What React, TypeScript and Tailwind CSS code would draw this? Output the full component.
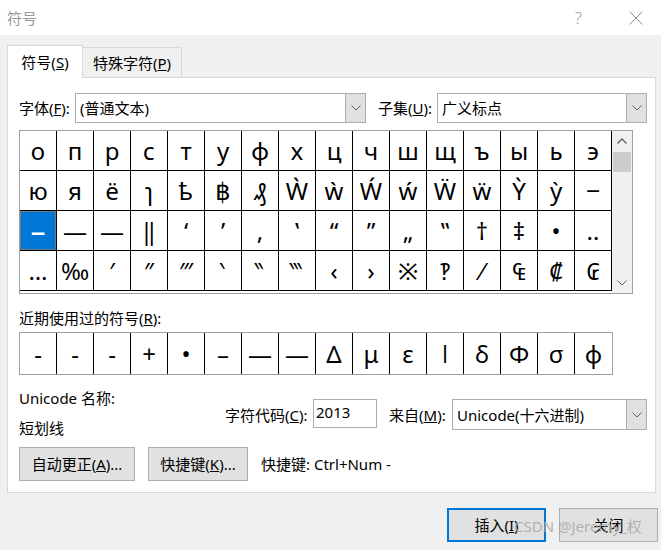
import React from 'react';

const rows: string[][] = [
  ['о', 'п', 'р', 'с', 'т', 'у', 'ф', 'х', 'ц', 'ч', 'ш', 'щ', 'ъ', 'ы', 'ь', 'э'],
  ['ю', 'я', 'ё', 'ɿ', 'ҍ', '฿', '₰', 'Ẁ', 'ẁ', 'Ẃ', 'ẃ', 'Ẅ', 'ẅ', 'Ỳ', 'ỳ', '‒'],
  ['–', '—', '―', '‖', '‘', '’', '‚', '‛', '“', '”', '„', '‟', '†', '‡', '•', '‥'],
  ['…', '‰', '′', '″', '‴', '‵', '‶', '‷', '‹', '›', '※', '‽', '⁄', '₠', '₡', '₢'],
];

const recent = ['-', '-', '-', '+', '•', '–', '—', '―', 'Δ', 'μ', 'ε', 'ǀ', 'δ', 'Φ', 'σ', 'φ'];

function ChevronDown() {
  return (
    <svg width="10" height="6" viewBox="0 0 10 6" fill="none">
      <polyline points="0.5,0.5 5,5 9.5,0.5" stroke="#606060" strokeWidth="1" />
    </svg>
  );
}

function ChevronUp() {
  return (
    <svg width="10" height="6" viewBox="0 0 10 6" fill="none">
      <polyline points="0.5,5.5 5,1 9.5,5.5" stroke="#606060" strokeWidth="1.3" />
    </svg>
  );
}

function Combo({ className, text }: { className: string; text: string }) {
  return (
    <div className={`flex border border-[#adadad] bg-white ${className}`}>
      <div className="flex-1 flex items-center pl-[4px] text-[15px] leading-[20px] text-black">{text}</div>
      <div className="w-[20px] bg-[#e1e1e1] border-l border-[#adadad] flex items-center justify-center">
        <ChevronDown />
      </div>
    </div>
  );
}

export default function App() {
  return (
    <div className="relative w-[661px] h-[550px] overflow-hidden bg-[#f0f0f0] font-['Noto_Sans','Noto_Sans_CJK_SC',sans-serif] text-black">
      {/* title bar */}
      <div className="h-[35px] bg-white flex items-center pl-[7px]">
        <div className="text-[15px] leading-[20px] text-[#999999]">符号</div>
        <div className="flex-1" />
        <div className="text-[17px] leading-[20px] text-[#9a9a9a] font-light mr-[47px]">?</div>
        <svg width="14" height="14" viewBox="0 0 14 14" className="mr-[18px]">
          <line x1="0.5" y1="0.5" x2="13.5" y2="13.5" stroke="#8a8a8a" strokeWidth="1" />
          <line x1="13.5" y1="0.5" x2="0.5" y2="13.5" stroke="#8a8a8a" strokeWidth="1" />
        </svg>
      </div>

      <div className="pl-[7px] pt-[10px]">
        {/* tabs */}
        <div className="flex items-end h-[32px]">
          <div className="relative z-10 -mb-px w-[76px] h-[33px] bg-white border border-b-0 border-[#d9d9d9] flex items-center justify-center text-[15px] leading-[20px]">
            符号(<u>S</u>)
          </div>
          <div className="w-[100px] h-[30px] -ml-px bg-[#f0f0f0] border border-b-0 border-[#d9d9d9] flex items-center justify-center text-[15px] leading-[20px]">
            特殊字符(<u>P</u>)
          </div>
        </div>

        {/* panel */}
        <div className="w-[649px] h-[416px] bg-white border border-[#d9d9d9] pl-[11px] pt-[15px]">
          {/* font row */}
          <div className="flex items-center h-[30px]">
            <div className="w-[56px] text-[15px] leading-[20px]">字体(<u>F</u>):</div>
            <Combo className="w-[291px] h-[30px]" text="(普通文本)" />
            <div className="ml-[12px] w-[59px] text-[15px] leading-[20px]">子集(<u>U</u>):</div>
            <Combo className="w-[210px] h-[30px]" text="广义标点" />
          </div>

          {/* symbol grid */}
          <div className="mt-[7px] flex w-[614px] h-[164px] border border-[#a0a0a0]">
            <div className="flex flex-col">
              {rows.map((r, ri) => (
                <div key={ri} className="flex">
                  {r.map((ch, ci) => {
                    const sel = ri === 2 && ci === 0;
                    return (
                      <div
                        key={ci}
                        className="w-[37px] h-[40px] border-r border-b border-black flex items-center justify-center"
                      >
                        {sel ? (
                          <div className="w-full h-full bg-[#0078d7] border border-dotted border-[#d9822b] flex items-center justify-center text-white text-[30px] leading-[30px] font-['Noto_Sans','DejaVu_Sans',sans-serif]">
                            {ch}
                          </div>
                        ) : (
                          <span className="text-[24px] leading-[30px] font-['Noto_Sans','DejaVu_Sans',sans-serif]">{ch}</span>
                        )}
                      </div>
                    );
                  })}
                </div>
              ))}
            </div>
            <div className="w-[20px] h-full bg-[#f0f0f0] flex flex-col">
              <div className="h-[20px] flex items-center justify-center">
                <ChevronUp />
              </div>
              <div className="mt-[1px] mx-[1px] h-[20px] bg-[#cdcdcd]" />
              <div className="flex-1" />
              <div className="h-[20px] flex items-center justify-center">
                <ChevronDown />
              </div>
            </div>
          </div>

          {/* recent */}
          <div className="mt-[14px] text-[15px] leading-[20px]">近期使用过的符号(<u>R</u>):</div>
          <div className="mt-[4px] flex w-[594px] h-[43px] border border-[#a0a0a0]">
            {recent.map((ch, i) => (
              <div
                key={i}
                className="w-[37px] h-full border-r border-black last:border-r-0 flex items-center justify-center text-[24px] font-['Noto_Sans','DejaVu_Sans',sans-serif]"
              >
                {ch}
              </div>
            ))}
          </div>

          {/* unicode info */}
          <div className="mt-[13px] flex">
            <div className="w-[206px] flex flex-col gap-[10px]">
              <div className="text-[15px] leading-[20px]">Unicode 名称:</div>
              <div className="text-[15px] leading-[20px]">短划线</div>
            </div>
            <div className="mt-[11px] flex items-start h-[31px]">
              <div className="h-[29px] flex items-center w-[88px] text-[15px] leading-[20px] pt-[3px]">字符代码(<u>C</u>):</div>
              <div className="w-[64px] h-[29px] border border-[#adadad] bg-white pl-[2px] text-[15px] leading-[20px] pt-[2px]">2013</div>
              <div className="ml-[12px] w-[63px] h-[29px] flex items-center text-[15px] leading-[20px] pt-[3px]">来自(<u>M</u>):</div>
              <Combo className="w-[195px] h-[31px]" text="Unicode(十六进制)" />
            </div>
          </div>

          {/* buttons row */}
          <div className="mt-[9px] flex items-center">
            <div className="w-[116px] h-[34px] bg-[#e1e1e1] border border-[#adadad] flex items-center justify-center text-[15px] leading-[20px]">
              自动更正(<u>A</u>)...
            </div>
            <div className="ml-[13px] w-[100px] h-[34px] bg-[#e1e1e1] border border-[#adadad] flex items-center justify-center text-[15px] leading-[20px]">
              快捷键(<u>K</u>)...
            </div>
            <div className="ml-[13px] text-[15px] leading-[20px]">快捷键: Ctrl+Num -</div>
          </div>
        </div>
      </div>

      {/* bottom buttons */}
      <div className="mt-[15px] flex justify-end pr-[3px]">
        <div className="w-[99px] h-[34px] bg-[#e1e1e1] border-2 border-[#0078d7] flex items-center justify-center text-[15px] leading-[20px]">
          插入(<u>I</u>)
        </div>
        <div className="ml-[13px] w-[99px] h-[34px] bg-[#e1e1e1] border border-[#adadad] flex items-center justify-center text-[15px] leading-[20px]">
          关闭
        </div>
      </div>

      <div className="absolute z-20 left-[514px] top-[516px] text-[15px] leading-[20px] text-[#a9a9a9]/90 font-['Noto_Sans','Noto_Sans_CJK_SC',sans-serif]">
        CSDN @Jeremy_权
      </div>
    </div>
  );
}
